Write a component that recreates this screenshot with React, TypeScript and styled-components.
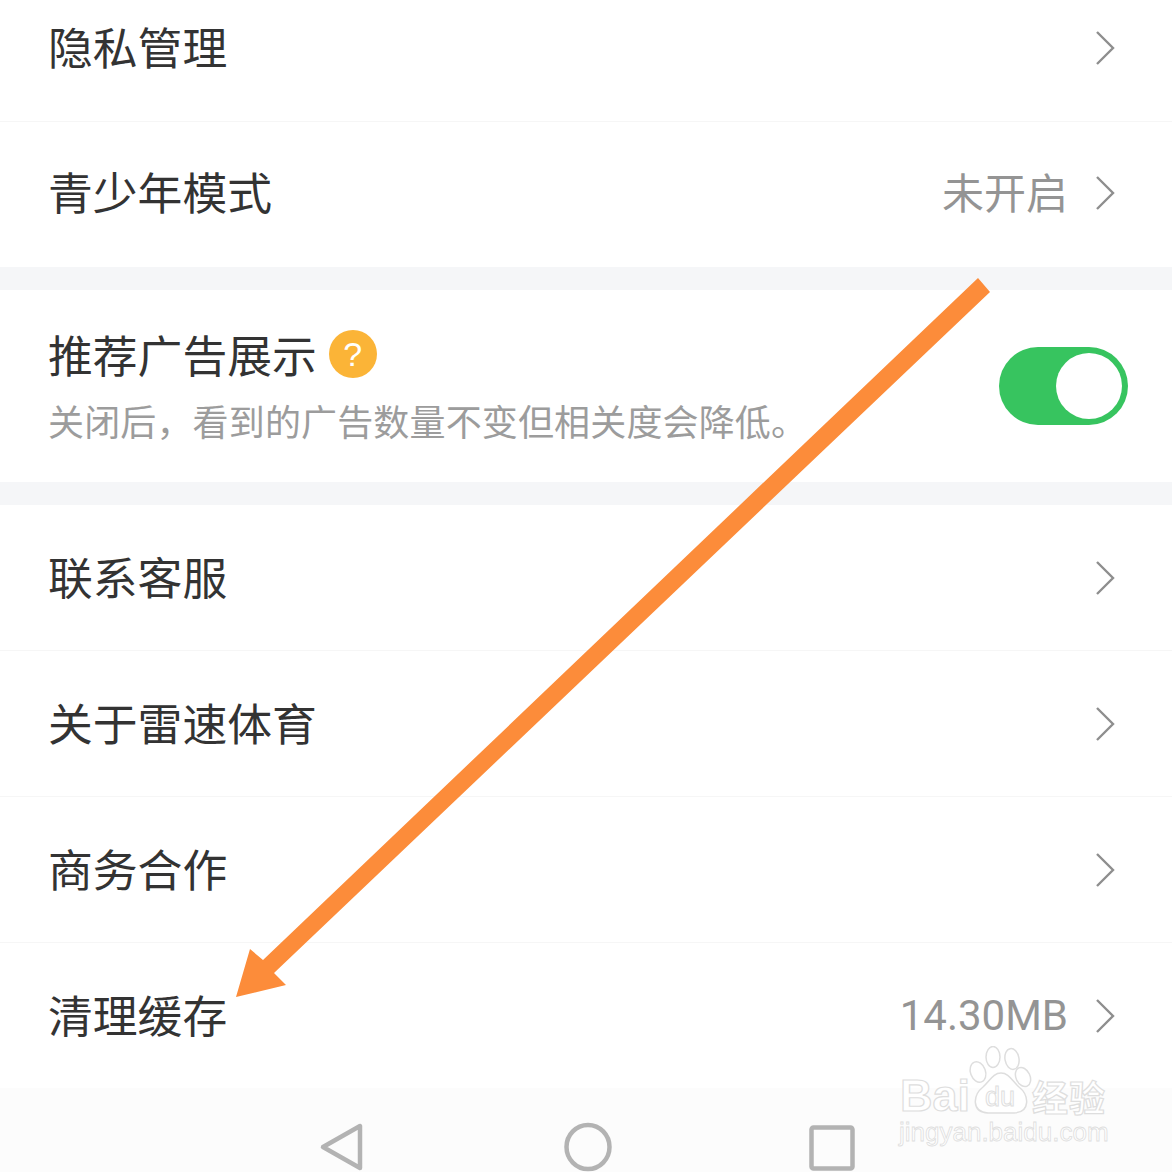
import React from 'react';
import styled, {createGlobalStyle} from 'styled-components';

const GlobalStyle = createGlobalStyle`
  html, body {
    margin: 0;
    padding: 0;
    background: #fff;
  }
  body {
    font-family: "Noto Sans CJK SC", "Noto Sans", sans-serif;
  }
`

const Page = styled.div`
  position: relative;
  width: 1172px;
  height: 1172px;
  overflow: hidden;
  background: #fff;
  display: flex;
  flex-direction: column;
`

const Row = styled.div<{$cropped?: boolean; $beforeBand?: boolean; $lift?: boolean}>`
  flex: none;
  height: ${p => p.$cropped ? 122 : p.$beforeBand ? 145 : 146}px;
  padding: 0 57px 0 48px;
  padding-bottom: ${p => p.$cropped ? 25 : p.$lift ? 3 : 0}px;
  box-sizing: border-box;
  display: flex;
  align-items: center;
  justify-content: space-between;
  border-bottom: ${p => p.$beforeBand ? 'none' : '1px solid #f6f6f6'};
`

const Title = styled.div`
  font-size: 44.8px;
  line-height: 56px;
  margin-top: -4px;
  font-weight: 400;
  color: #333;
`

const Right = styled.div<{$gap: number}>`
  display: flex;
  align-items: center;
  gap: ${p => p.$gap}px;
`

const Value = styled.div<{$latin?: boolean}>`
  font-family: ${p => p.$latin ? '"Roboto", sans-serif' : '"Noto Sans CJK SC", sans-serif'};
  font-size: 42px;
  font-weight: 400;
  color: #949494;
  line-height: 56px;
  margin-top: ${p => p.$latin ? 0 : -4}px;
`

const Band = styled.div`
  flex: none;
  height: 23px;
  background: #f5f6f8;
`

const AdRow = styled.div`
  flex: none;
  height: 192px;
  padding: 0 44px 0 48px;
  box-sizing: border-box;
  display: flex;
  align-items: center;
  justify-content: space-between;
`

const AdText = styled.div`
  display: flex;
  flex-direction: column;
  gap: 15px;
  margin-top: 1px;
`

const AdTitle = styled.div`
  display: flex;
  align-items: center;
  gap: 12px;
`

const HelpBadge = styled.div`
  width: 48px;
  height: 48px;
  margin-top: -5px;
  border-radius: 50%;
  background: #fbb437;
  color: #fff;
  display: flex;
  align-items: center;
  justify-content: center;
  font-family: "Liberation Sans", sans-serif;
  font-size: 34px;
  line-height: 1;
`

const Sub = styled.div`
  font-size: 36px;
  line-height: 46px;
  letter-spacing: 0.15px;
  color: #9c9c9c;
  white-space: nowrap;
`

const Toggle = styled.div`
  flex: none;
  width: 129px;
  height: 78px;
  border-radius: 39px;
  background: #37c45f;
  padding: 6px;
  box-sizing: border-box;
  display: flex;
  justify-content: flex-end;
`

const Knob = styled.div`
  width: 66px;
  height: 66px;
  border-radius: 50%;
  background: #fff;
`

const NavBar = styled.div`
  flex: 1;
  background: #fcfcfc;
  display: flex;
  align-items: flex-start;
  padding: 35px 0 0 319px;
  gap: 197px;
`

const NavIcon = styled.svg`
  flex: none;
  display: block;
  overflow: visible;
`

const ArrowLayer = styled.svg`
  position: absolute;
  left: 0;
  top: 0;
  pointer-events: none;
`

const Watermark = styled.div`
  position: absolute;
  left: 898px;
  top: 1046px;
  width: 214px;
  height: 104px;
  pointer-events: none;
`

const WaterPaw = styled.svg`
  position: absolute;
  left: 0;
  top: 0;
`

const WaterLogo = styled.div`
  position: absolute;
  font-family: "Liberation Sans", sans-serif;
  font-weight: 700;
  color: #fff;
  -webkit-text-stroke: 1.2px #dedede;
  white-space: nowrap;
`

const WaterBai = styled(WaterLogo)`
  left: 2px;
  top: 27px;
  font-size: 45px;
  line-height: 46px;
`

const WaterDu = styled(WaterLogo)`
  left: 87px;
  top: 36px;
  font-size: 27px;
  line-height: 30px;
  font-weight: 400;
  -webkit-text-stroke: 1px #dedede;
`

const WaterCn = styled(WaterLogo)`
  left: 134px;
  top: 30px;
  font-family: "Noto Sans CJK SC", sans-serif;
  font-size: 36px;
  line-height: 40px;
  letter-spacing: 1px;
`

const WaterUrl = styled(WaterLogo)`
  left: 1px;
  top: 71px;
  font-size: 26px;
  line-height: 30px;
  font-weight: 400;
  -webkit-text-stroke: 0.8px #dedede;
`

const Chevron = () => (
  <svg width="20" height="36" viewBox="0 0 20 36" fill="none">
    <path d="M2 2 L18 18 L2 34" stroke="#8e8e8e" strokeWidth="2.4" />
  </svg>
)

export default function App() {
  return <Page>
    <GlobalStyle/>

    <Row $cropped>
      <Title>隐私管理</Title>
      <Chevron/>
    </Row>
    <Row $beforeBand $lift>
      <Title>青少年模式</Title>
      <Right $gap={27}>
        <Value>未开启</Value>
        <Chevron/>
      </Right>
    </Row>
    <Band/>

    <AdRow>
      <AdText>
        <AdTitle>
          <Title>推荐广告展示</Title>
          <HelpBadge>?</HelpBadge>
        </AdTitle>
        <Sub>关闭后，看到的广告数量不变但相关度会降低。</Sub>
      </AdText>
      <Toggle><Knob/></Toggle>
    </AdRow>
    <Band/>

    <Row>
      <Title>联系客服</Title>
      <Chevron/>
    </Row>
    <Row>
      <Title>关于雷速体育</Title>
      <Chevron/>
    </Row>
    <Row>
      <Title>商务合作</Title>
      <Chevron/>
    </Row>
    <Row $beforeBand>
      <Title>清理缓存</Title>
      <Right $gap={27}>
        <Value $latin>14.30MB</Value>
        <Chevron/>
      </Right>
    </Row>

    <NavBar>
      <NavIcon width="48" height="48" viewBox="0 0 48 48" fill="none">
        <path d="M41 3 V45 L4 24 Z" stroke="#b3b3b3" strokeWidth="4.5" strokeLinejoin="round" />
      </NavIcon>
      <NavIcon width="48" height="48" viewBox="0 0 48 48" fill="none">
        <ellipse cx="24" cy="24" rx="21.5" ry="22" stroke="#b3b3b3" strokeWidth="4.5" />
      </NavIcon>
      <NavIcon width="46" height="46" viewBox="0 0 46 46" fill="none">
        <rect x="2.5" y="4.5" width="41" height="41" rx="2" stroke="#b3b3b3" strokeWidth="4.5" />
      </NavIcon>
    </NavBar>

    <Watermark>
      <WaterPaw width="214" height="104" viewBox="0 0 214 104" fill="#fff" stroke="#dedede" strokeWidth="1.5">
        <ellipse cx="80" cy="26" rx="7.5" ry="10.5" transform="rotate(-20 80 26)" />
        <ellipse cx="95" cy="11" rx="7" ry="10.5" />
        <ellipse cx="114" cy="13" rx="7" ry="10.5" transform="rotate(-10 114 13)" />
        <ellipse cx="125" cy="31" rx="7" ry="10" transform="rotate(-25 125 31)" />
        <path d="M103 27 C95 27 92 35 85 41 C75 49 73 66 90 67 C98 67 108 67 116 67 C133 66 131 49 121 41 C114 35 111 27 103 27 Z" />
      </WaterPaw>
      <WaterBai>Bai</WaterBai>
      <WaterDu>du</WaterDu>
      <WaterCn>经验</WaterCn>
      <WaterUrl>jingyan.baidu.com</WaterUrl>
    </Watermark>

    <ArrowLayer width="1172" height="1172" viewBox="0 0 1172 1172">
      <path
        d="M978 278 L990 292 L274 973 L286 985 L236 997 L250 949 L263 960 Z"
        fill="#fc8c3a"
      />
    </ArrowLayer>
  </Page>
}
